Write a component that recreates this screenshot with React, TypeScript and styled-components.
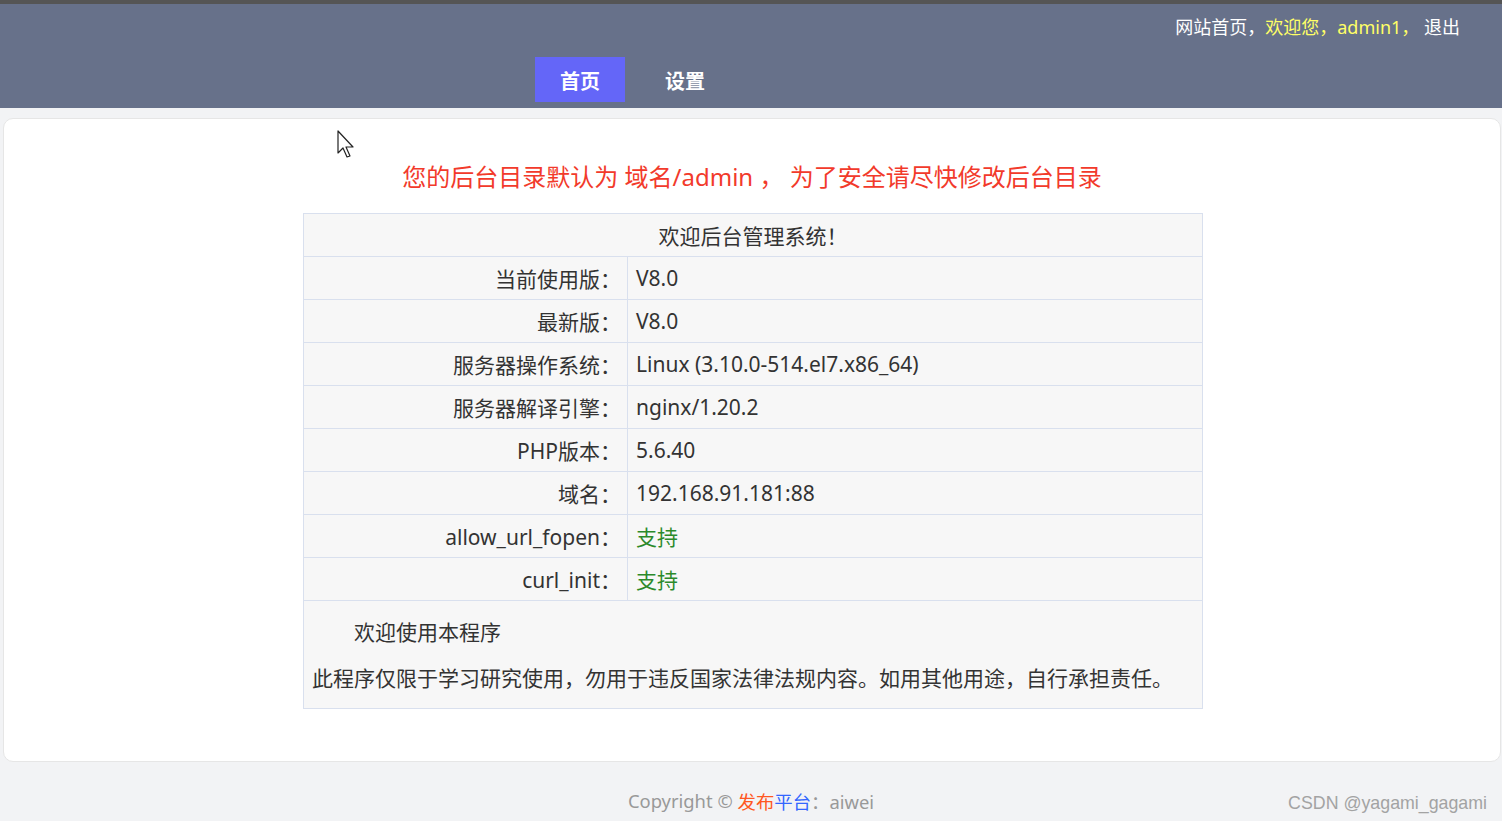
import styled, { createGlobalStyle } from 'styled-components';

const GlobalStyle = createGlobalStyle`
  html, body {
    margin: 0;
    padding: 0;
    background: #f2f3f5;
  }
  body {
    font-family: "Noto Sans", "Noto Sans CJK SC", sans-serif;
    color: #333;
  }
`

const Page = styled.div`
  position: relative;
  width: 1502px;
  height: 821px;
  overflow: hidden;
  background: #f2f3f5;
  border-top: 4px solid #555555;
  box-sizing: border-box;
`

const Header = styled.header`
  height: 104px;
  background: #67718a;
  display: flex;
  flex-direction: column;
`

const TopLinks = styled.div`
  display: flex;
  justify-content: flex-end;
  padding: 10px 42px 0 0;
  height: 33px;
  font-size: 18px;
  line-height: 26px;
  color: #fff;
`

type LinkProps = { $tone?: 'white' | 'yellow' };

const TopLink = styled.span<LinkProps>`
  color: ${(p: LinkProps) => (p.$tone === 'yellow' ? '#ffff66' : '#ffffff')};
  white-space: pre;
`

const Nav = styled.nav`
  display: flex;
  padding-left: 535px;
  margin-top: 10px;
  gap: 10px;
`

type NavProps = { $active?: boolean };

const NavItem = styled.a<NavProps>`
  width: 90px;
  height: 45px;
  display: flex;
  align-items: center;
  justify-content: center;
  padding-top: 2px;
  box-sizing: border-box;
  font-size: 20px;
  font-weight: bold;
  color: #fff;
  background: ${(p: NavProps) => (p.$active ? '#6466f8' : 'transparent')};
  &:nth-child(2) {
    margin-left: 5px;
  }
`

const Card = styled.main`
  margin: 10px 1px 0 3px;
  height: 644px;
  box-sizing: border-box;
  background: #fff;
  border: 1px solid #e6e6e6;
  border-radius: 10px;
  padding-top: 40px;
  display: flex;
  flex-direction: column;
  align-items: center;
`

const Notice = styled.h2`
  margin: 0 0 18px 0;
  font-size: 24px;
  line-height: 36px;
  font-weight: normal;
  color: #f23a2b;
`

const Table = styled.table`
  width: 900px;
  margin-left: 2px;
  border-collapse: collapse;
  background: #f7f7f7;
  font-size: 21px;
  color: #333;
  td, th {
    border: 1px solid #d9e0ee;
    height: 42px;
    padding: 0;
  }
`

const HeadCell = styled.th`
  font-weight: normal;
  text-align: center;
`

const Label = styled.td`
  width: 317px;
  text-align: right;
  padding-right: 6px !important;
`

type ValueProps = { $ok?: boolean };

const Value = styled.td<ValueProps>`
  padding-left: 8px !important;
  color: ${(p: ValueProps) => (p.$ok ? '#2b8a2b' : '#333')};
`

const InfoCell = styled.td`
  padding: 16px 8px 15px 8px !important;
`

const InfoLine = styled.p`
  margin: 0;
  line-height: 30px;
  & + & {
    margin-top: 16px;
  }
`

const Indent = styled(InfoLine)`
  text-indent: 2em;
`

const Footer = styled.footer`
  height: 59px;
  display: flex;
  align-items: center;
  justify-content: center;
  padding-top: 18px;
  box-sizing: border-box;
  font-size: 18.4px;
  color: #999;
`

type SpanProps = { $c: string };

const Colored = styled.span<SpanProps>`
  color: ${(p: SpanProps) => p.$c};
`

const Watermark = styled.div`
  position: absolute;
  right: 15px;
  bottom: 7px;
  font-family: "Liberation Sans", "Noto Sans CJK SC", sans-serif;
  font-size: 17.8px;
  color: #a3a3a3;
`

const Cursor = styled.svg`
  position: absolute;
  left: 337px;
  top: 126px;
`

const rows = [
  { label: '当前使用版：', value: 'V8.0' },
  { label: '最新版：', value: 'V8.0' },
  { label: '服务器操作系统：', value: 'Linux (3.10.0-514.el7.x86_64)' },
  { label: '服务器解译引擎：', value: 'nginx/1.20.2' },
  { label: 'PHP版本：', value: '5.6.40' },
  { label: '域名：', value: '192.168.91.181:88' },
  { label: 'allow_url_fopen：', value: '支持', ok: true },
  { label: 'curl_init：', value: '支持', ok: true }
];

function App() {
  return (
    <Page>
      <GlobalStyle />
      <Header>
        <TopLinks>
          <TopLink>网站首页，</TopLink>
          <TopLink $tone="yellow">欢迎您，admin1，</TopLink>
          <TopLink> 退出</TopLink>
        </TopLinks>
        <Nav>
          <NavItem $active>首页</NavItem>
          <NavItem>设置</NavItem>
        </Nav>
      </Header>
      <Card>
        <Notice>您的后台目录默认为 域名/admin ， 为了安全请尽快修改后台目录</Notice>
        <Table>
          <tbody>
            <tr>
              <HeadCell colSpan={2}>欢迎后台管理系统！</HeadCell>
            </tr>
            {rows.map(row => (
              <tr key={row.label}>
                <Label>{row.label}</Label>
                <Value $ok={row.ok}>{row.value}</Value>
              </tr>
            ))}
            <tr>
              <InfoCell colSpan={2}>
                <Indent>欢迎使用本程序</Indent>
                <InfoLine>此程序仅限于学习研究使用，勿用于违反国家法律法规内容。如用其他用途，自行承担责任。</InfoLine>
              </InfoCell>
            </tr>
          </tbody>
        </Table>
      </Card>
      <Footer>
        Copyright ©&nbsp;<Colored $c="#ff5722">发布</Colored><Colored $c="#3366ff">平台</Colored>：aiwei
      </Footer>
      <Watermark>CSDN @yagami_gagami</Watermark>
      <Cursor width="22" height="32" viewBox="0 0 22 32">
        <path d="M1 1 L1 23 L6 18 L10 27 L13 26 L9 17 L16 17 Z" fill="#fff" stroke="#222" strokeWidth="1.2" strokeLinejoin="round" />
      </Cursor>
    </Page>
  );
}

export default App;
